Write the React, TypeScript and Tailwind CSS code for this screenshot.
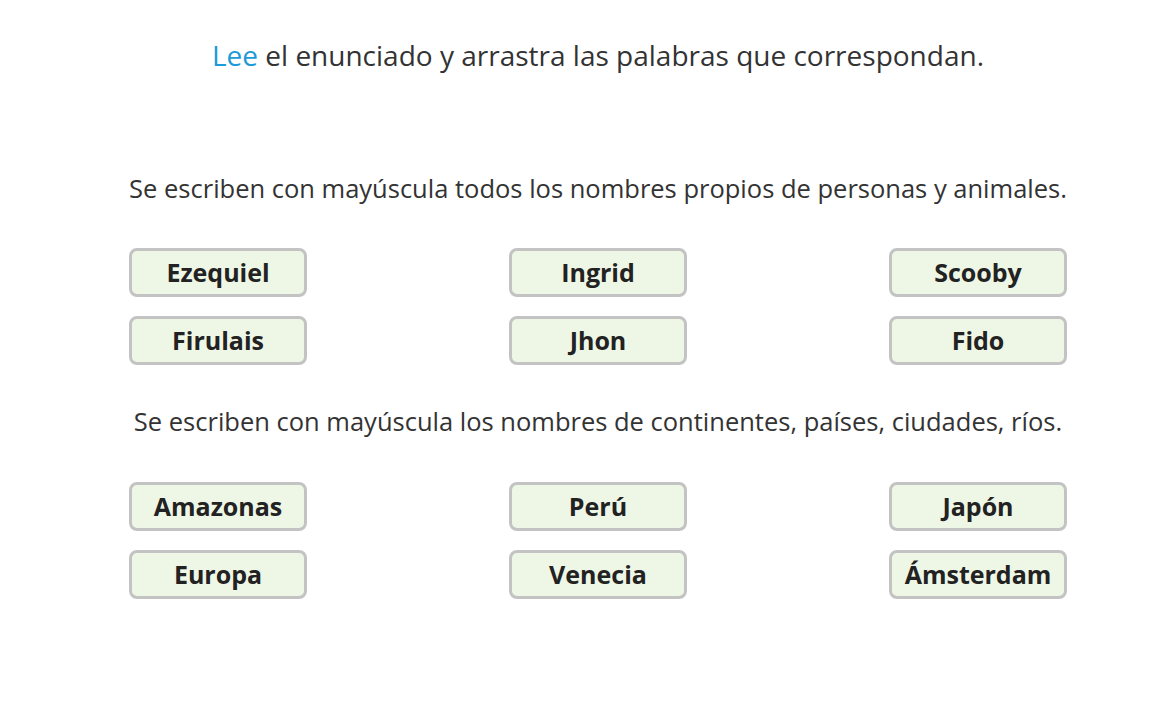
import React from "react";

const rows1 = [
  ["Ezequiel", "Ingrid", "Scooby"],
  ["Firulais", "Jhon", "Fido"],
];
const rows2 = [
  ["Amazonas", "Perú", "Japón"],
  ["Europa", "Venecia", "Ámsterdam"],
];

function Chip({ label }: { label: string }) {
  return (
    <div className="w-[178px] h-[49px] rounded-[8px] border-[3px] border-[#c3c3c3] bg-[#eef6e5] flex items-center justify-center text-[25px] font-bold text-[#222]">
      {label}
    </div>
  );
}

function Grid({ rows }: { rows: string[][] }) {
  return (
    <div className="flex flex-col gap-[19px]">
      {rows.map((r, i) => (
        <div key={i} className="flex justify-between">
          {r.map((w) => (
            <Chip key={w} label={w} />
          ))}
        </div>
      ))}
    </div>
  );
}

export default function App() {
  return (
    <div
      className="w-[1174px] h-[713px] bg-white text-[#333]"
      style={{ fontFamily: '"Open Sans", "Noto Sans", sans-serif' }}
    >
      <div className="ml-[129px] w-[938px] flex flex-col">
        <div className="mt-[35px] h-[40px] flex items-center justify-center whitespace-nowrap text-[28px]">
          <span className="text-[#1d9ad9]">Lee</span>
          <span>&nbsp;el enunciado y arrastra las palabras que correspondan.</span>
        </div>
        <div className="mt-[96px] h-[34px] flex items-center justify-center whitespace-nowrap text-[25.5px]">
          Se escriben con mayúscula todos los nombres propios de personas y animales.
        </div>
        <div className="mt-[43px]">
          <Grid rows={rows1} />
        </div>
        <div className="mt-[39px] h-[34px] flex items-center justify-center whitespace-nowrap text-[25.5px]">
          Se escriben con mayúscula los nombres de continentes, países, ciudades, ríos.
        </div>
        <div className="mt-[44px]">
          <Grid rows={rows2} />
        </div>
      </div>
    </div>
  );
}
